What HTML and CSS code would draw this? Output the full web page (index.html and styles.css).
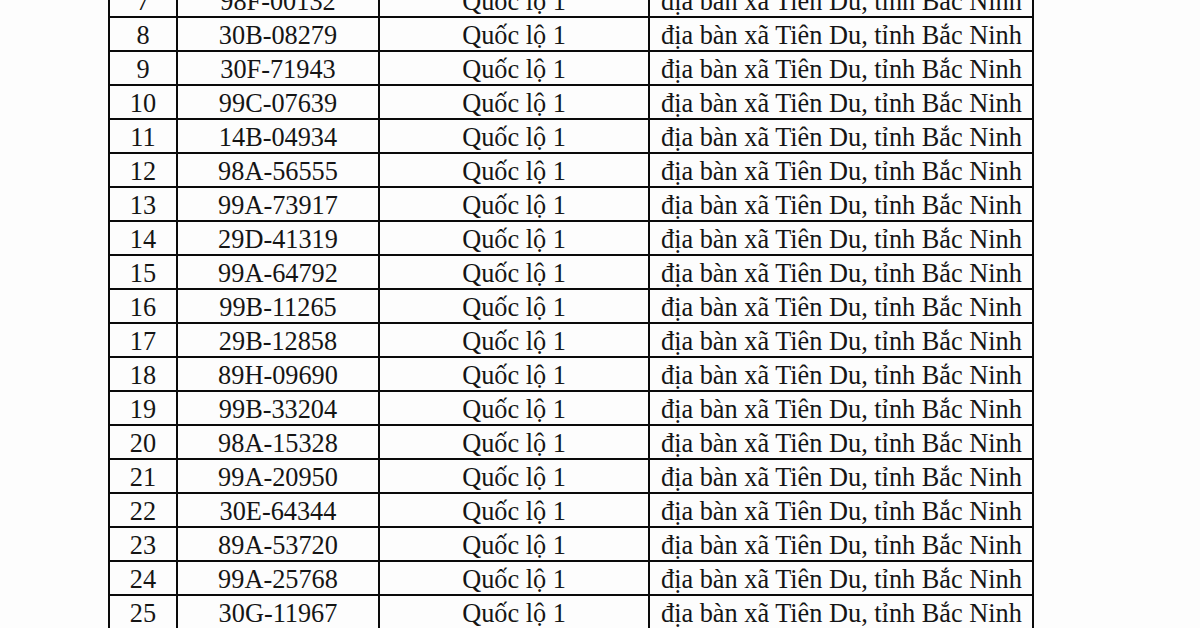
FILE: index.html
```html
<!DOCTYPE html>
<html lang="vi">
<head>
<meta charset="utf-8">
<link rel="stylesheet" href="styles.css">
</head>
<body>
<div class="sheet">
  <div class="grid">
    <div class="c num">7</div><div class="c plate">98F-00132</div><div class="c road">Quốc lộ 1</div><div class="c place">địa bàn xã Tiên Du, tỉnh Bắc Ninh</div>
    <div class="c num">8</div><div class="c plate">30B-08279</div><div class="c road">Quốc lộ 1</div><div class="c place">địa bàn xã Tiên Du, tỉnh Bắc Ninh</div>
    <div class="c num">9</div><div class="c plate">30F-71943</div><div class="c road">Quốc lộ 1</div><div class="c place">địa bàn xã Tiên Du, tỉnh Bắc Ninh</div>
    <div class="c num">10</div><div class="c plate">99C-07639</div><div class="c road">Quốc lộ 1</div><div class="c place">địa bàn xã Tiên Du, tỉnh Bắc Ninh</div>
    <div class="c num">11</div><div class="c plate">14B-04934</div><div class="c road">Quốc lộ 1</div><div class="c place">địa bàn xã Tiên Du, tỉnh Bắc Ninh</div>
    <div class="c num">12</div><div class="c plate">98A-56555</div><div class="c road">Quốc lộ 1</div><div class="c place">địa bàn xã Tiên Du, tỉnh Bắc Ninh</div>
    <div class="c num">13</div><div class="c plate">99A-73917</div><div class="c road">Quốc lộ 1</div><div class="c place">địa bàn xã Tiên Du, tỉnh Bắc Ninh</div>
    <div class="c num">14</div><div class="c plate">29D-41319</div><div class="c road">Quốc lộ 1</div><div class="c place">địa bàn xã Tiên Du, tỉnh Bắc Ninh</div>
    <div class="c num">15</div><div class="c plate">99A-64792</div><div class="c road">Quốc lộ 1</div><div class="c place">địa bàn xã Tiên Du, tỉnh Bắc Ninh</div>
    <div class="c num">16</div><div class="c plate">99B-11265</div><div class="c road">Quốc lộ 1</div><div class="c place">địa bàn xã Tiên Du, tỉnh Bắc Ninh</div>
    <div class="c num">17</div><div class="c plate">29B-12858</div><div class="c road">Quốc lộ 1</div><div class="c place">địa bàn xã Tiên Du, tỉnh Bắc Ninh</div>
    <div class="c num">18</div><div class="c plate">89H-09690</div><div class="c road">Quốc lộ 1</div><div class="c place">địa bàn xã Tiên Du, tỉnh Bắc Ninh</div>
    <div class="c num">19</div><div class="c plate">99B-33204</div><div class="c road">Quốc lộ 1</div><div class="c place">địa bàn xã Tiên Du, tỉnh Bắc Ninh</div>
    <div class="c num">20</div><div class="c plate">98A-15328</div><div class="c road">Quốc lộ 1</div><div class="c place">địa bàn xã Tiên Du, tỉnh Bắc Ninh</div>
    <div class="c num">21</div><div class="c plate">99A-20950</div><div class="c road">Quốc lộ 1</div><div class="c place">địa bàn xã Tiên Du, tỉnh Bắc Ninh</div>
    <div class="c num">22</div><div class="c plate">30E-64344</div><div class="c road">Quốc lộ 1</div><div class="c place">địa bàn xã Tiên Du, tỉnh Bắc Ninh</div>
    <div class="c num">23</div><div class="c plate">89A-53720</div><div class="c road">Quốc lộ 1</div><div class="c place">địa bàn xã Tiên Du, tỉnh Bắc Ninh</div>
    <div class="c num">24</div><div class="c plate">99A-25768</div><div class="c road">Quốc lộ 1</div><div class="c place">địa bàn xã Tiên Du, tỉnh Bắc Ninh</div>
    <div class="c num">25</div><div class="c plate">30G-11967</div><div class="c road">Quốc lộ 1</div><div class="c place">địa bàn xã Tiên Du, tỉnh Bắc Ninh</div>
  </div>
</div>
</body>
</html>
```
FILE: styles.css
```css
html, body {
  margin: 0;
  padding: 0;
  background: #fdfdfd;
  overflow: hidden;
}
.sheet {
  width: 1200px;
  height: 628px;
  overflow: hidden;
  padding-left: 108px;
  box-sizing: border-box;
}
.grid {
  display: grid;
  grid-template-columns: 68px 202px 270px 384px;
  grid-auto-rows: 34px;
  width: max-content;
  margin-top: -18px;
  border-left: 2px solid #0a0a0a;
  border-top: 2px solid #0a0a0a;
  font-family: "Liberation Serif", "Times New Roman", serif;
  font-size: 26.3px;
  color: #151515;
}
.c {
  box-sizing: border-box;
  border-right: 2px solid #0a0a0a;
  border-bottom: 2px solid #0a0a0a;
  padding-top: 4px;
  line-height: 28px;
  white-space: nowrap;
  overflow: hidden;
}
.num, .plate, .road {
  text-align: center;
}
.place {
  text-align: left;
  padding-left: 11px;
}
```
